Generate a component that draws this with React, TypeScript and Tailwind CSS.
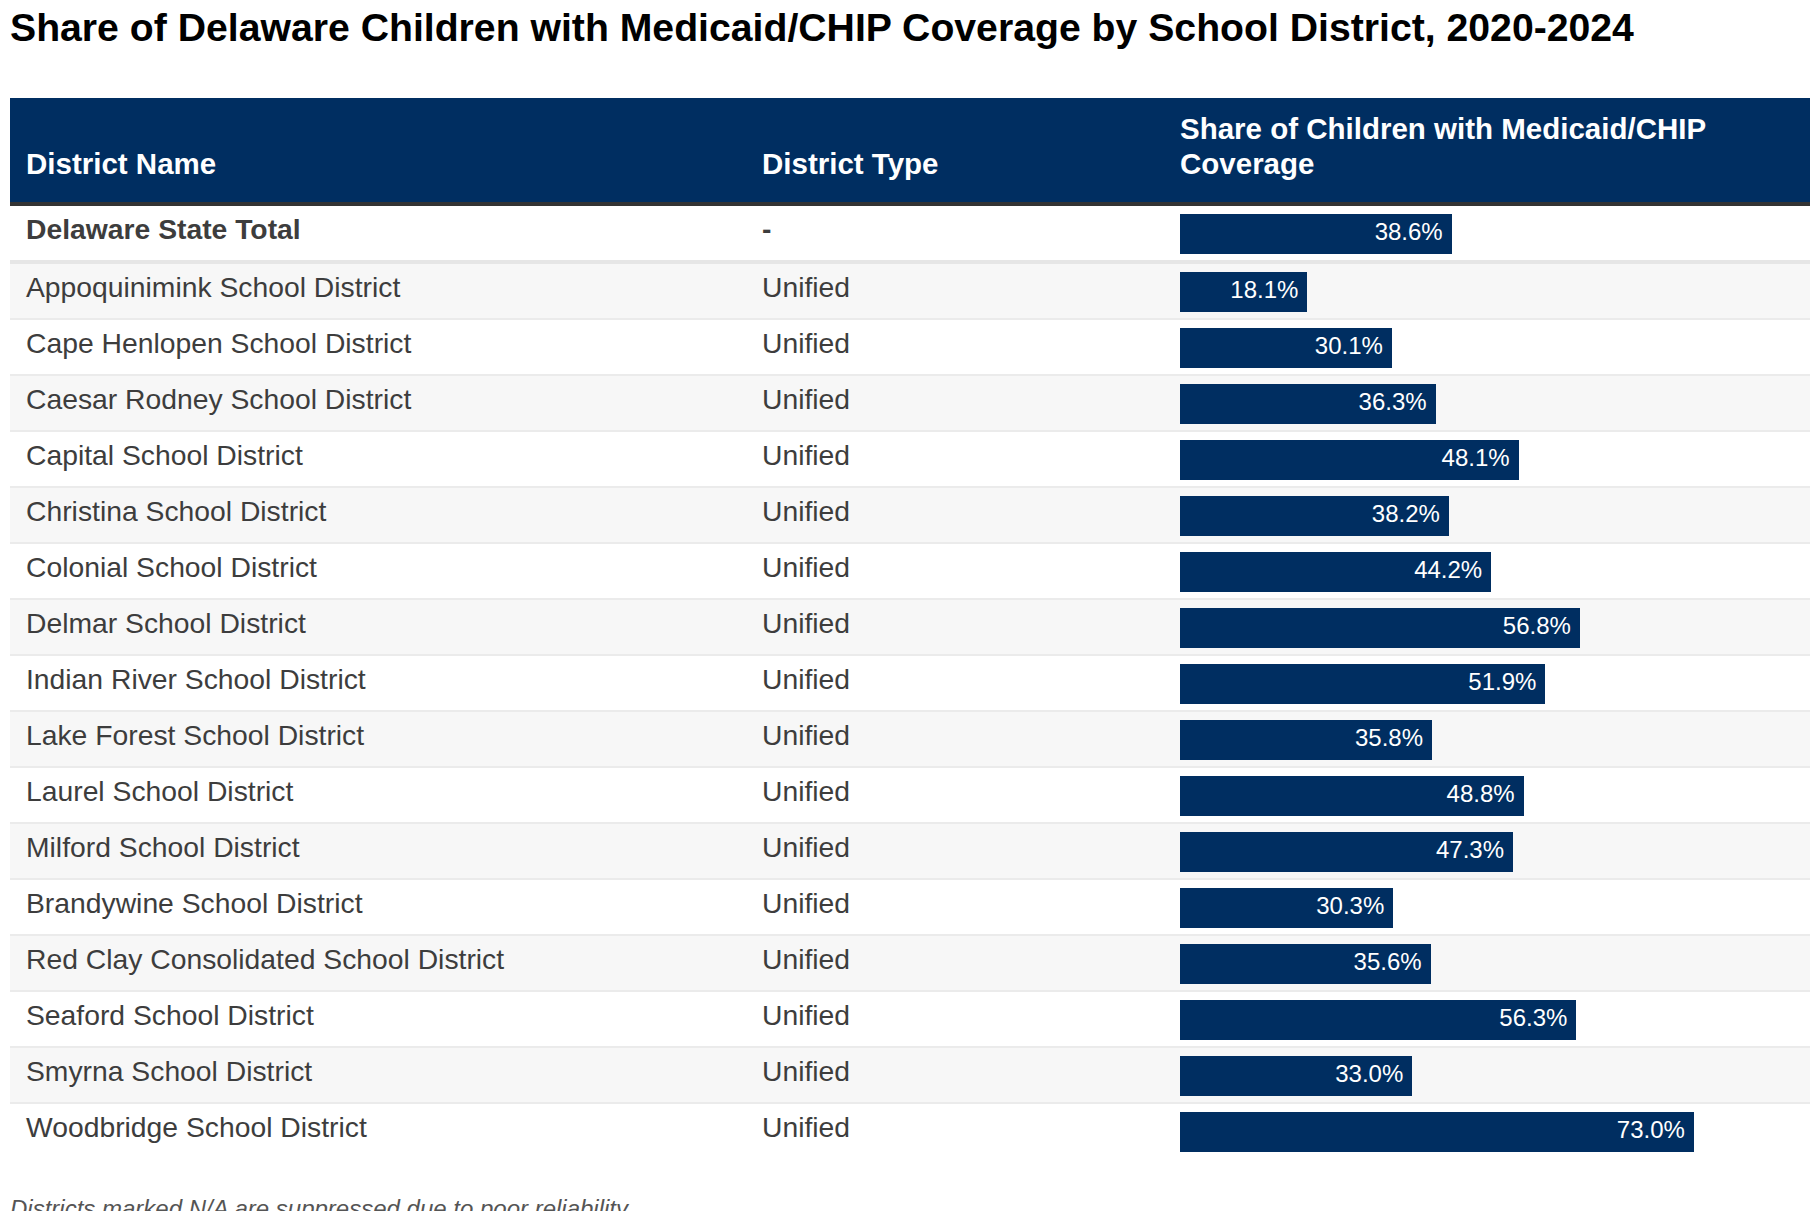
import React from "react";

type Row = { name: string; type: string; value: number; bold?: boolean };

const rows: Row[] = [
  { name: "Delaware State Total", type: "-", value: 38.6, bold: true },
  { name: "Appoquinimink School District", type: "Unified", value: 18.1 },
  { name: "Cape Henlopen School District", type: "Unified", value: 30.1 },
  { name: "Caesar Rodney School District", type: "Unified", value: 36.3 },
  { name: "Capital School District", type: "Unified", value: 48.1 },
  { name: "Christina School District", type: "Unified", value: 38.2 },
  { name: "Colonial School District", type: "Unified", value: 44.2 },
  { name: "Delmar School District", type: "Unified", value: 56.8 },
  { name: "Indian River School District", type: "Unified", value: 51.9 },
  { name: "Lake Forest School District", type: "Unified", value: 35.8 },
  { name: "Laurel School District", type: "Unified", value: 48.8 },
  { name: "Milford School District", type: "Unified", value: 47.3 },
  { name: "Brandywine School District", type: "Unified", value: 30.3 },
  { name: "Red Clay Consolidated School District", type: "Unified", value: 35.6 },
  { name: "Seaford School District", type: "Unified", value: 56.3 },
  { name: "Smyrna School District", type: "Unified", value: 33.0 },
  { name: "Woodbridge School District", type: "Unified", value: 73.0 },
];

export default function App() {
  return (
    <div className="h-[1211px] overflow-hidden bg-white px-[10px] font-['Liberation_Sans',Arial,sans-serif]">
      <h1 className="pt-[4px] text-[39.2px] leading-[48px] font-bold text-black">
        Share of Delaware Children with Medicaid/CHIP Coverage by School District, 2020-2024
      </h1>

      <div className="mt-[46px] w-[1800px]">
        <div className="flex items-end border-b-4 border-[#333333] bg-[#002e61] pt-[13px] pb-[21px] text-[29.5px] leading-[35px] font-bold text-white">
          <div className="w-[736px] shrink-0 pl-4">District Name</div>
          <div className="w-[418px] shrink-0 pl-4">District Type</div>
          <div className="flex-1 pl-4 pr-4">Share of Children with Medicaid/CHIP Coverage</div>
        </div>

        {rows.map((r, i) => {
          const isFirst = i === 0;
          const isLast = i === rows.length - 1;
          const rowCls = isFirst
            ? "h-[58px] border-b-4 border-[#e6e6e6] bg-white"
            : isLast
            ? "h-[54px] bg-white"
            : i % 2 === 1
            ? "h-[56px] border-b-2 border-[#ebebeb] bg-[#f7f7f7]"
            : "h-[56px] border-b-2 border-[#ebebeb] bg-white";
          return (
            <div
              key={r.name}
              className={`flex ${rowCls} text-[28.3px] leading-[30px] text-[#3d3d3d] ${r.bold ? "font-bold" : ""}`}
            >
              <div className="w-[736px] shrink-0 pl-4 pt-2">{r.name}</div>
              <div className="w-[418px] shrink-0 pl-4 pt-2">{r.type}</div>
              <div className="flex-1 pl-4 pt-2">
                <div
                  className="h-[40px] bg-[#002e61] pr-[9px] text-right text-[24px] leading-[36px] font-normal text-white"
                  style={{ width: `${(r.value * 7.04).toFixed(1)}px` }}
                >
                  {r.value.toFixed(1)}%
                </div>
              </div>
            </div>
          );
        })}
      </div>

      <p className="mt-[39px] text-[24px] leading-[24px] italic text-[#555555]">
        Districts marked N/A are suppressed due to poor reliability.
      </p>
    </div>
  );
}
